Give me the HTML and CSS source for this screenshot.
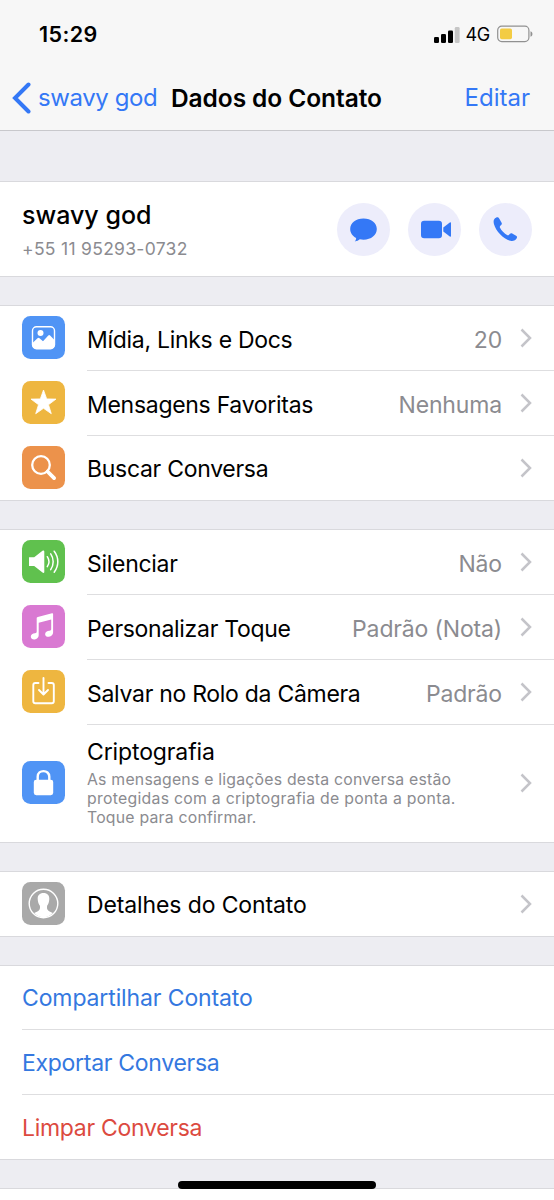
FILE: index.html
```html
<!DOCTYPE html>
<html lang="pt-BR">
<head>
<meta charset="utf-8">
<title>Dados do Contato</title>
<link rel="stylesheet" href="styles.css">
</head>
<body>
<svg class="defs" width="0" height="0" aria-hidden="true">
  <symbol id="chevron" viewBox="0 0 12 20"><path d="M1.500 1.500 10 10l-8.500 8.500" fill="none" stroke="#c4c4c9" stroke-width="2.500"/></symbol>
</svg>
<div class="screen">
  <header class="top">
    <div class="status">
      <span class="time">15:29</span>
      <span class="indicators">
        <svg width="26" height="17" viewBox="0 0 26 17"><rect x="0" y="11" width="5" height="6" rx="1.300"/><rect x="7" y="8" width="5" height="9" rx="1.300"/><rect x="14" y="4.500" width="5" height="12.500" rx="1.300"/><rect x="20.800" y="1" width="4.800" height="16" rx="1.300" fill="#c6c6c6"/></svg>
        <span class="net">4G</span>
        <svg width="37" height="18" viewBox="0 0 37 18"><rect x=".7" y="1.200" width="31.200" height="15.400" rx="4" fill="none" stroke="#919191" stroke-width="1.200"/><rect x="3" y="3.500" width="12" height="10.800" rx="1.700" fill="#f3cc43"/><path d="M33.500 6.300c2.600.9 2.600 4.600 0 5.500z" fill="#919191"/></svg>
      </span>
    </div>
    <nav class="nav">
      <a class="back"><svg width="19" height="32" viewBox="0 0 19 32"><path d="M16.500 2.500 3 16l13.500 13.500" fill="none" stroke="#3478f6" stroke-width="4" stroke-linecap="round"/></svg><span>swavy god</span></a>
      <h1>Dados do Contato</h1>
      <a class="edit">Editar</a>
    </nav>
  </header>

  <section class="group profile">
    <div class="who"><div class="name">swavy god</div><div class="phone">+55 11 95293-0732</div></div>
    <div class="actions">
      <span class="round"><svg width="53" height="53" viewBox="0 0 53 53"><path d="M26.500 15.500c7.700 0 13.300 4.500 13.300 10.500s-5.600 10.700-13.300 10.700c-1.300 0-2.500-.1-3.700-.4-1.300 1.200-2.900 1.900-5 2.100.9-1 1.400-2.100 1.300-3.400-3.600-1.900-5.900-5.100-5.900-9 0-6 5.600-10.500 13.300-10.500z"/></svg></span>
      <span class="round"><svg width="53" height="53" viewBox="0 0 53 53"><rect x="13" y="17.800" width="21" height="17.400" rx="3.200"/><path d="M35.300 24.400l6.500-4.900c.6-.4 1.200-.1 1.200.6v12.800c0 .7-.6 1-1.200.6l-6.500-4.900z"/></svg></span>
      <span class="round"><svg width="53" height="53" viewBox="0 0 53 53"><path d="M15.800 15.500c1-1 2.200-1.700 3.200-1.200 1 .6 2.600 3.800 3.600 5.500.6 1.100.1 1.800-.7 2.500-.9.800-1.400 1.300-1 2.300 1.300 3 4.400 6 7.500 7.600 1 .5 1.600-.2 2.300-1.100.7-.8 1.500-1.200 2.500-.7l4.300 2.700c1 .8.400 2.100-.5 3.200-1.300 1.500-3.300 2-5.500 1.500-7-1.700-14.600-9.500-16.500-16.500-.6-2.300-.6-4.300.8-5.800z"/></svg></span>
    </div>
  </section>

  <section class="group">
    <div class="row">
      <svg class="icon blue" viewBox="0 0 43 43"><rect x="10.500" y="10.700" width="22" height="22" rx="4" fill="none" stroke="#fff" stroke-width="1.400"/><circle cx="18.500" cy="17" r="3" fill="#fff"/><path d="M10.500 27l5-4.700c.7-.7 1.300-.7 2 0l3.500 3 5.300-5.800c.6-.7 1.200-.7 1.800 0l4.400 4.500v5.200c0 2-1.500 3.500-3.500 3.500H14c-2 0-3.500-1.500-3.500-3.500z" fill="#fff"/></svg>
      <div class="body"><span class="label">Mídia, Links e Docs</span><span class="value">20</span><svg class="chev"><use href="#chevron"/></svg></div>
    </div>
    <div class="row">
      <svg class="icon yellow" viewBox="0 0 43 43"><path d="M21.500 9l3.200 8.900 9.300.2-7.500 5.600 2.800 9-7.800-5.400-7.800 5.400 2.800-9L9 18.100l9.300-.2z" fill="#fff" stroke="#fff" stroke-width=".8" stroke-linejoin="round"/></svg>
      <div class="body"><span class="label">Mensagens Favoritas</span><span class="value">Nenhuma</span><svg class="chev"><use href="#chevron"/></svg></div>
    </div>
    <div class="row high">
      <svg class="icon orange" viewBox="0 0 43 43"><g fill="none" stroke="#fff"><circle cx="19" cy="19" r="8.800" stroke-width="2.300"/><path d="M25.500 25.500l6.600 6.600" stroke-width="3.800" stroke-linecap="round"/></g></svg>
      <div class="body"><span class="label">Buscar Conversa</span><svg class="chev"><use href="#chevron"/></svg></div>
    </div>
  </section>

  <section class="group">
    <div class="row">
      <svg class="icon green" viewBox="0 0 43 43"><path d="M7 17.200h5.200L20.500 10.800c1-.7 1.800-.4 1.800.7v20.400c0 1.100-.8 1.400-1.800.7l-8.300-6.600H7z" fill="#fff"/><g fill="none" stroke="#fff" stroke-width="1.500" stroke-linecap="round"><path d="M25.300 16.700c2 3 2 7 0 10M28.700 13.900c3.300 4.700 3.300 11 0 15.700M32.200 11.200c4.800 6.400 4.800 14.500 0 21"/></g></svg>
      <div class="body"><span class="label">Silenciar</span><span class="value">Não</span><svg class="chev"><use href="#chevron"/></svg></div>
    </div>
    <div class="row">
      <svg class="icon pink" viewBox="0 0 43 43"><path d="M14.700 13.500c0-.8.300-1.200 1.100-1.400L30 8.200c.7-.2 1.100.1 1.100.8v18.600c0 2.300-1.700 3.900-4.100 4.200-2.200.2-3.900-.8-3.900-2.600 0-2.200 2-3.400 4.400-3.500 1.200-.1 1.700-.5 1.700-1.700V14.400l-12.500 3.300v12.500c0 2.300-1.700 3.900-4.100 4.200-2.100.2-3.800-.8-3.800-2.600 0-2.200 1.900-3.400 4.200-3.500 1.200-.1 1.700-.5 1.700-1.700z" fill="#fff"/></svg>
      <div class="body"><span class="label">Personalizar Toque</span><span class="value">Padrão (Nota)</span><svg class="chev"><use href="#chevron"/></svg></div>
    </div>
    <div class="row">
      <svg class="icon yellow" viewBox="0 0 43 43"><g fill="none" stroke="#fff" stroke-width="1.900" stroke-linecap="round" stroke-linejoin="round"><path d="M16.500 13H13.300q-2 0-2 2v16.300q0 2 2 2h16.500q2 0 2-2V15q0-2-2-2h-3.300M21.500 8v15.500M17 20l4.500 4.500L26 20"/></g></svg>
      <div class="body"><span class="label">Salvar no Rolo da Câmera</span><span class="value">Padrão</span><svg class="chev"><use href="#chevron"/></svg></div>
    </div>
    <div class="row tall">
      <svg class="icon blue" viewBox="0 0 43 43"><path d="M15.700 20v-4.300c0-7.500 11.600-7.500 11.600 0V20" fill="none" stroke="#fff" stroke-width="2.400"/><rect x="11.800" y="18.700" width="19.400" height="15.500" rx="2.400" fill="#fff"/></svg>
      <div class="body"><div class="text"><div class="label loose">Criptografia</div><p>As mensagens e ligações desta conversa estão<br><span class="wide">protegidas com a criptografia de ponta a ponta.</span><br>Toque para confirmar.</p></div><svg class="chev"><use href="#chevron"/></svg></div>
    </div>
  </section>

  <section class="group">
    <div class="row high">
      <svg class="icon gray" viewBox="0 0 43 43"><circle cx="21.500" cy="21.500" r="14.300" fill="none" stroke="#fff" stroke-width="1.400"/><path d="M21.500 11c3.900 0 6 2.400 5.800 6-.1 3-1 5.300-2.200 6.800-.5 3 .2 4.700 2.500 5.700l3.200 1.500c-4.800 5.600-13.800 5.600-18.600 0l3.200-1.500c2.300-1 3-2.700 2.500-5.700-1.200-1.500-2.100-3.800-2.200-6.800-.2-3.600 1.900-6 5.800-6z" fill="#fff"/></svg>
      <div class="body"><span class="label loose">Detalhes do Contato</span><svg class="chev"><use href="#chevron"/></svg></div>
    </div>
  </section>

  <section class="group links">
    <a class="link loose">Compartilhar Contato</a>
    <a class="link">Exportar Conversa</a>
    <a class="link danger">Limpar Conversa</a>
  </section>

  <footer class="next"><div class="home"></div></footer>
</div>
</body>
</html>
```

FILE: styles.css
```css
* { box-sizing: border-box; }
body { margin: 0; background: #ededf2; font-family: Inter, "Liberation Sans", sans-serif; color: #000; }
.defs { position: absolute; }
.screen { width: 554px; height: 1200px; overflow: hidden; display: flex; flex-direction: column; white-space: nowrap; }
.screen > * { flex: none; }

.top { height: 131px; background: #f7f7f7; border-bottom: 1px solid #c8c8cc; }
.status { height: 68px; padding: 0 20px 0 39px; display: flex; justify-content: space-between; align-items: center; }
.time { font-size: 21.5px; font-weight: 600; letter-spacing: 0.4px; }
.indicators { display: flex; align-items: center; }
.net { font-size: 18px; margin: 1px 7px 0 6px; letter-spacing: -0.3px; }
.nav { height: 60px; display: flex; align-items: center; padding: 0 24px 0 12px; font-size: 24px; }
.back { display: flex; align-items: center; gap: 7px; width: 159px; color: #3478f6; letter-spacing: -0.4px; }
.nav span, .nav h1, .edit { padding-bottom: 1px; }
.nav h1 { flex: 1; margin: 0; font-size: 24.5px; font-weight: 600; letter-spacing: -0.08px; }
.edit { color: #3478f6; }

.group { background: #fff; border-top: 1px solid #d9d9dd; border-bottom: 1px solid #d9d9dd; margin-bottom: 28px; }
.profile { margin-top: 50px; height: 96px; display: flex; justify-content: space-between; padding: 0 22px; }
.who { padding-top: 17px; }
.name { font-size: 25px; line-height: 32px; font-weight: 500; }
.phone { font-size: 17.5px; line-height: 22px; margin-top: 7px; color: #8b8b90; letter-spacing: 0.3px; }
.actions { display: flex; gap: 18px; align-items: center; }
.round { width: 53px; height: 53px; border-radius: 50%; background: #ededfb; }
.round svg { display: block; fill: #3478f6; }

.row { display: flex; align-items: center; padding-left: 22px; }
.icon { flex: none; width: 43px; height: 43px; border-radius: 8.5px; margin: 0 22px 2px 0; }
.blue { background: #5094f5; }
.yellow { background: #eeb640; }
.orange { background: #ec924b; }
.green { background: #60c14e; }
.pink { background: #d979d2; }
.gray { background: #a9a9a9; }
.body { flex: 1; height: 64px; display: flex; align-items: center; padding-right: 22px; box-sizing: content-box; }
.row:not(:last-child) .body { border-bottom: 1px solid #dedee0; }
.label, .value { font-size: 23px; line-height: 30px; padding-top: 3px; }
.label, .link { letter-spacing: -0.29px; }
.high .label { padding-top: 1px; }
.loose { letter-spacing: -0.12px; }
.value { margin-left: auto; color: #8b8b90; letter-spacing: -0.16px; }
.chev { width: 12px; height: 20px; margin: 0 0 1px 18px; }
.label + .chev, .text + .chev { margin-left: auto; }
.tall .body { height: 117px; }
.text { align-self: flex-start; padding-top: 9px; }
.text p { margin: 3px 0 0; font-size: 15.8px; line-height: 19.2px; color: #8b8b90; letter-spacing: 0.22px; }
.text .wide { letter-spacing: 0.28px; }

.links { padding-left: 22px; }
.link { display: block; height: 65px; line-height: 66px; font-size: 23px; color: #3478e0; border-bottom: 1px solid #dedee0; }
.link:first-child { height: 64px; line-height: 65px; }
.link:last-child { border: 0; height: 64px; }
.danger { color: #dc4a3f; }

.next { height: 13px; background: #fff; border-top: 1px solid #d9d9dd; position: relative; }
.home { position: absolute; left: 178px; top: -8px; width: 198px; height: 8px; border-radius: 4px; background: #000; }
```
